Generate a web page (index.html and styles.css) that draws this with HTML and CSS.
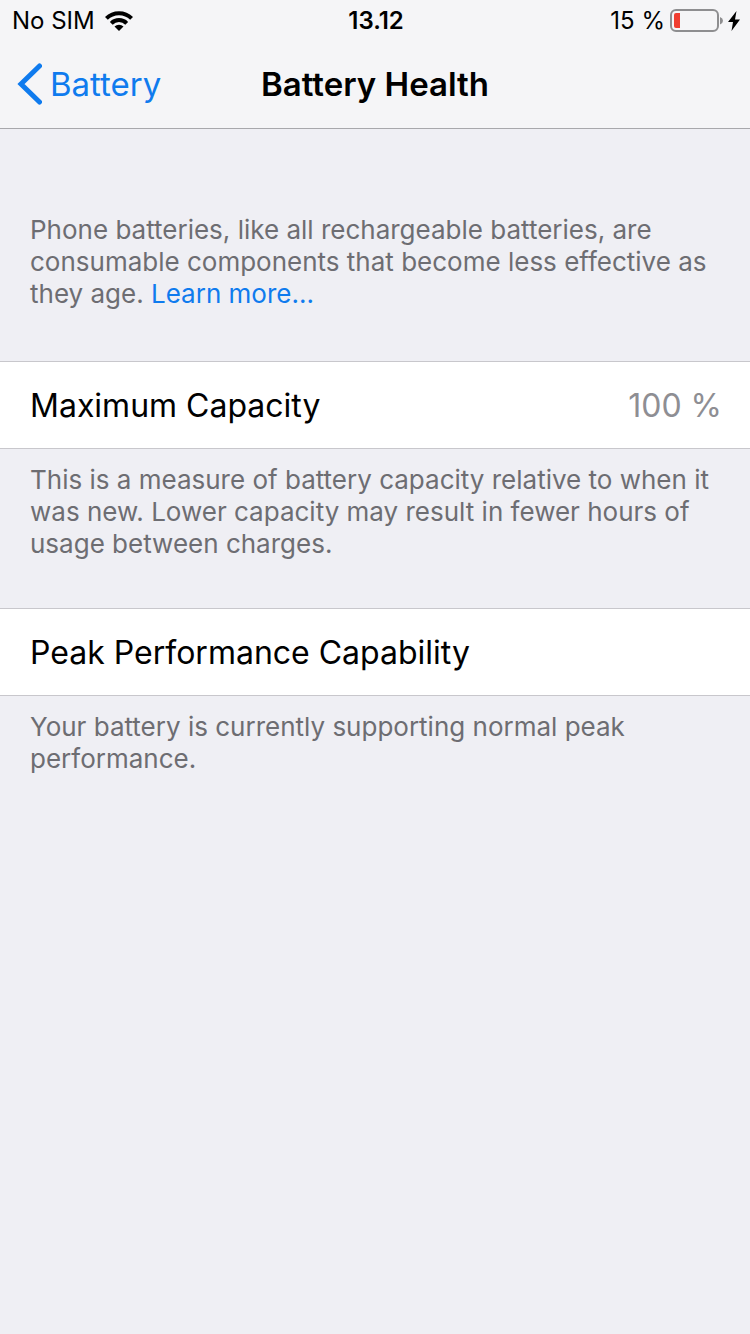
FILE: index.html
```html
<!DOCTYPE html>
<html lang="en">
<head>
  <meta charset="UTF-8" />
  <meta name="viewport" content="width=device-width, initial-scale=1.0"/>
  <title>Battery Health</title>
  <link rel="stylesheet" href="styles.css">
</head>
<body>
  <header>
    <div class="status-bar">
      <div class="carrier">
        <span>No SIM</span>
        <svg class="wifi" width="28" height="20" viewBox="0 0 28 20" fill="none" stroke="#000" stroke-width="4">
          <path d="M1.4 7.400a17.800 17.800 0 0 1 25.200 0"></path>
          <path d="M6.300 12.300a10.900 10.900 0 0 1 15.400 0"></path>
          <path d="M14 20l-4.500-4.400a6.400 6.400 0 0 1 9 0z" fill="#000" stroke="none"></path>
        </svg>
      </div>
      <div class="time">13.12</div>
      <div class="power">
        <span>15 %</span>
        <svg class="battery" width="53" height="24" viewBox="0 0 53 24">
          <rect x="1" y="1" width="47" height="21" rx="5" fill="none" stroke="#8e8e90" stroke-width="2"></rect>
          <path d="M50 8v7.500q3-1.200 3-3.750t-3-3.750z" fill="#8e8e90"></path>
          <path d="M6 4h4v15h-4q-2 0-2-2v-11q0-2 2-2z" fill="#f03d30"></path>
        </svg>
        <svg class="bolt" width="12" height="20" viewBox="0 0 12 20">
          <path d="M8.500 0L0 11h5L3.500 20 12 8.500H7z" fill="#000"></path>
        </svg>
      </div>
    </div>
    <nav class="nav-bar">
      <a class="back-link" href="#">
        <svg width="26" height="42" viewBox="0 0 26 42" fill="none" stroke="#0f7bee" stroke-width="5" stroke-linecap="round">
          <path d="M23.500 3L5 21l18.500 18"></path>
        </svg>
        Battery
      </a>
      <h1>Battery Health</h1>
    </nav>
  </header>

  <main>
    <p class="note intro">Phone batteries, like all rechargeable batteries, are consumable components that become less effective as they age. <a href="#">Learn more...</a></p>

    <section>
      <div class="row">
        <h2>Maximum Capacity</h2>
        <span class="value">100 %</span>
      </div>
      <p class="note">This is a measure of battery capacity relative to when it was new. Lower capacity may result in fewer hours of usage between charges.</p>
    </section>

    <section>
      <div class="row">
        <h2>Peak Performance Capability</h2>
      </div>
      <p class="note">Your battery is currently supporting normal peak performance.</p>
    </section>
  </main>
</body>
</html>
```

FILE: styles.css
```css
* {
  box-sizing: border-box;
}
body {
  margin: 0;
  font-family: Inter, Roboto, sans-serif;
  background-color: #efeff4;
  color: #000;
}
header {
  padding-bottom: 2px;
  background: #f5f5f7;
  border-bottom: 1px solid #a8a8ac;
}
.status-bar,
.nav-bar {
  display: grid;
  grid-template-columns: 1fr auto 1fr;
  align-items: center;
}
.status-bar {
  height: 41px;
  padding: 0 10px 0 12px;
  font-size: 24px;
}
.carrier,
.power {
  display: flex;
  align-items: center;
}
.carrier {
  gap: 10px;
}
.power {
  justify-content: flex-end;
  gap: 5px;
}
.time {
  font-weight: 600;
}
.nav-bar {
  height: 85px;
  padding: 0 16px;
}
.back-link {
  display: flex;
  align-items: center;
  gap: 8px;
  font-size: 33px;
}
h1 {
  margin: 0;
  font-size: 33px;
  font-weight: 600;
}
a {
  color: #0f7bee;
  text-decoration: none;
}
.note {
  margin: 0;
  padding: 15px 30px 48px;
  font-size: 26px;
  line-height: 32px;
  color: #6d6d72;
}
.intro {
  padding-top: 85px;
  padding-bottom: 51px;
}
.row {
  display: flex;
  justify-content: space-between;
  align-items: center;
  height: 88px;
  padding: 0 28px 0 30px;
  background: #fff;
  border-top: 1px solid #c8c7cc;
  border-bottom: 1px solid #c8c7cc;
  font-size: 32px;
}
h2 {
  margin: 0;
  font-size: 32px;
  font-weight: 400;
}
.value {
  color: #8e8e93;
}
```
